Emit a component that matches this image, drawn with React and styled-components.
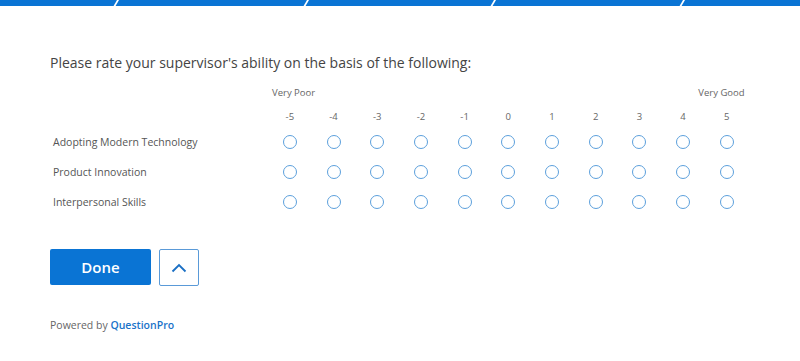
import React from "react";
import styled, { createGlobalStyle } from "styled-components";

const Global = createGlobalStyle`
  html, body { margin: 0; padding: 0; background: #fff; }
  body { font-family: "Open Sans", "Noto Sans", sans-serif; color: #555; }
`;

const Page = styled.div`
  width: 800px;
  height: 361px;
  overflow: hidden;
  background: #fff;
`;

const ProgressBar = styled.div`
  display: flex;
  height: 6px;
  background: #0a74d4;
  position: relative;
  overflow: hidden;
`;

const Segment = styled.div`
  flex: 0 0 ${(p) => p.$w}px;
  position: relative;
  &::after {
    content: "";
    position: absolute;
    right: -1px;
    top: -1px;
    width: 1.5px;
    height: 9px;
    background: #fff;
    transform: skewX(-30deg);
    display: ${(p) => (p.$last ? "none" : "block")};
  }
`;

const Content = styled.div`
  padding: 47px 50px 0 50px;
`;

const Title = styled.h1`
  margin: 0;
  font-size: 14px;
  font-weight: 400;
  color: #444;
  line-height: 20px;
`;

const Table = styled.div`
  margin-top: 6px;
  display: grid;
  grid-template-columns: 218px repeat(11, 43.7px);
`;

const ScaleLabelRow = styled.div`
  grid-column: 2 / span 11;
  display: flex;
  justify-content: space-between;
  align-items: center;
  padding: 0 4px;
  font-size: 9.5px;
  color: #666;
  height: 26px;
`;

const Spacer = styled.div``;

const Num = styled.div`
  font-size: 9.5px;
  color: #666;
  height: 22px;
  display: flex;
  align-items: center;
  justify-content: center;
`;

const RowLabel = styled.div`
  padding-left: 3px;
  font-size: 10.5px;
  color: #555;
  height: 30px;
  display: flex;
  align-items: center;
`;

const Cell = styled.div`
  height: 30px;
  display: flex;
  align-items: center;
  justify-content: center;
`;

const Radio = styled.span`
  width: 12px;
  height: 12px;
  border: 1.6px solid #5ca0dc;
  border-radius: 50%;
  box-sizing: content-box;
`;

const Actions = styled.div`
  margin-top: 32px;
  display: flex;
  gap: 8px;
`;

const DoneButton = styled.button`
  width: 101px;
  height: 36px;
  background: #0a74d4;
  color: #fff;
  border: none;
  border-radius: 2px;
  font-family: "Open Sans", "Noto Sans", sans-serif;
  font-size: 15px;
  font-weight: 600;
  cursor: pointer;
`;

const UpButton = styled.button`
  width: 40px;
  height: 37px;
  background: #fff;
  border: 1px solid #5a9ad8;
  border-radius: 2px;
  display: flex;
  align-items: center;
  justify-content: center;
  padding: 0;
`;

const Footer = styled.div`
  margin-top: 32px;
  font-size: 10.5px;
  line-height: 14px;
  color: #666;
`;

const Brand = styled.span`
  color: #1a73c9;
  font-weight: 600;
`;

const cols = [-5, -4, -3, -2, -1, 0, 1, 2, 3, 4, 5];
const rows = ["Adopting Modern Technology", "Product Innovation", "Interpersonal Skills"];

export default function App() {
  return (
    <Page>
      <Global />
      <ProgressBar>
        <Segment $w={115} />
        <Segment $w={190} />
        <Segment $w={187} />
        <Segment $w={189} />
        <Segment $w={119} $last />
      </ProgressBar>
      <Content>
        <Title>Please rate your supervisor's ability on the basis of the following:</Title>
        <Table>
          <Spacer />
          <ScaleLabelRow>
            <span>Very Poor</span>
            <span>Very Good</span>
          </ScaleLabelRow>
          <Spacer />
          {cols.map((c) => (
            <Num key={c}>{c}</Num>
          ))}
          {rows.map((r) => (
            <React.Fragment key={r}>
              <RowLabel>{r}</RowLabel>
              {cols.map((c) => (
                <Cell key={c}>
                  <Radio />
                </Cell>
              ))}
            </React.Fragment>
          ))}
        </Table>
        <Actions>
          <DoneButton>Done</DoneButton>
          <UpButton>
            <svg width="16" height="10" viewBox="0 0 16 10">
              <path d="M1.5 8.5 L8 2 L14.5 8.5" fill="none" stroke="#1a6fc4" strokeWidth="1.8" />
            </svg>
          </UpButton>
        </Actions>
        <Footer>
          Powered by <Brand>QuestionPro</Brand>
        </Footer>
      </Content>
    </Page>
  );
}
